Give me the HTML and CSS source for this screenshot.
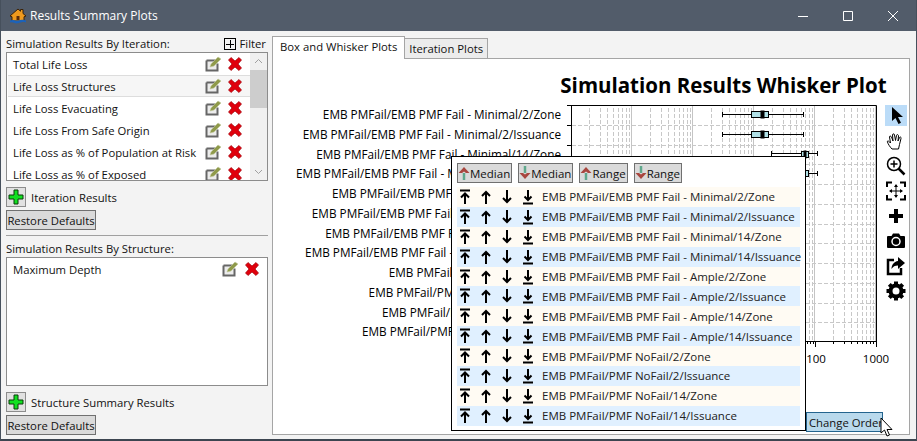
FILE: index.html
```html
<!DOCTYPE html>
<html lang="en">
<head>
<meta charset="UTF-8" />
<title>Results Summary Plots</title>
<link rel="stylesheet" href="styles.css">
</head>
<body>
<svg class="sprites" width="0" height="0">
  <symbol id="i-edit" viewBox="0 0 16 16">
    <path d="M1.500 4.500h9M1.500 4.500v10h11v-7" fill="#ececec" stroke="#666" stroke-width="2"/>
    <path d="M5 11l1-3 7-7 3 2-7 7z" fill="#8f9a4a" stroke="#c3c9a0" stroke-width=".6"/>
  </symbol>
  <symbol id="i-del" viewBox="0 0 14 14">
    <path d="M.5 3l2.500-2.500 4 3.500 4-3.500 2.500 2.500-3.500 4 3.500 4-2.500 2.500-4-3.500-4 3.500-2.500-2.500 3.500-4z" fill="#e0000c" stroke="#a00008" stroke-width=".7"/>
  </symbol>
  <symbol id="i-add" viewBox="0 0 16 16">
    <path d="M6 1h4v5h5v4h-5v5h-4v-5h-5v-4h5z" fill="#10e020" stroke="#0a3a0a" stroke-width="1"/>
  </symbol>
  <symbol id="i-top" viewBox="0 0 14 16">
    <path d="M2 1.500h10M7 15v-10M3 8.500l4-4 4 4" fill="none" stroke="#000" stroke-width="2"/>
  </symbol>
  <symbol id="i-up" viewBox="0 0 14 16">
    <path d="M7 15v-12M3 7l4-4 4 4" fill="none" stroke="#000" stroke-width="2"/>
  </symbol>
  <symbol id="i-down" viewBox="0 0 14 16">
    <path d="M7 1v12M3 9l4 4 4-4" fill="none" stroke="#000" stroke-width="2"/>
  </symbol>
  <symbol id="i-bottom" viewBox="0 0 14 16">
    <path d="M2 14.500h10M7 1v9.500M3.500 7.500l3.500 3.500 3.500-3.500" fill="none" stroke="#000" stroke-width="2"/>
  </symbol>
  <symbol id="i-sort-up" viewBox="0 0 12 16">
    <path d="M6 15v-7" stroke="#5fa88c" stroke-width="2.500"/>
    <path d="M.5 8l5.500-6 5.500 6-3.500 0-2-1.500-2 1.500z" fill="#a8473f"/>
  </symbol>
  <symbol id="i-sort-down" viewBox="0 0 12 16">
    <path d="M6 1v7" stroke="#5fa88c" stroke-width="2.500"/>
    <path d="M.5 8l5.500 6 5.500-6-3.500 0-2 1.500-2-1.500z" fill="#a8473f"/>
  </symbol>
</svg>

<div class="window">
  <div class="titlebar">
    <svg class="app-icon" width="18" height="18" viewBox="0 0 18 18">
      <path d="M1 9l8-7 2.500 2.200v-1.700h2.500v4l3 2.500-2 .8v4.200h-12v-4.200z" fill="#ee9a1e" stroke="#3a2208" stroke-width="1"/>
      <path d="M7.500 9h3v4h-3z" fill="#5a2c08"/>
      <path d="M1 13.500c3-1.500 5 .5 8 0s5-1.500 8 0v2c-3-1-5 0-8 .8s-5-1.800-8-.8z" fill="#1c62b8"/>
    </svg>
    <span class="title-text">Results Summary Plots</span>
    <div class="win-controls">
      <svg width="10" height="10" viewBox="0 0 10 10"><path d="M0 5.500h10" stroke="#fff"/></svg>
      <svg width="10" height="10" viewBox="0 0 10 10"><path d="M.5.500h9v9h-9z" fill="none" stroke="#fff"/></svg>
      <svg width="10" height="10" viewBox="0 0 10 10"><path d="M0 0l10 10M10 0l-10 10" stroke="#fff"/></svg>
    </div>
  </div>

  <div class="main">
    <div class="sidebar">
      <div class="list-head">
        <span>Simulation Results By Iteration:</span>
        <span class="filter"><span class="filter-box"></span>Filter</span>
      </div>
      <div class="list-box">
        <div class="list-rows">
          <div class="list-row"><span class="row-name">Total Life Loss</span><svg class="ico-edit"><use href="#i-edit"/></svg><svg class="ico-del"><use href="#i-del"/></svg></div>
          <div class="list-row hover"><span class="row-name">Life Loss Structures</span><svg class="ico-edit"><use href="#i-edit"/></svg><svg class="ico-del"><use href="#i-del"/></svg></div>
          <div class="list-row"><span class="row-name">Life Loss Evacuating</span><svg class="ico-edit"><use href="#i-edit"/></svg><svg class="ico-del"><use href="#i-del"/></svg></div>
          <div class="list-row"><span class="row-name">Life Loss From Safe Origin</span><svg class="ico-edit"><use href="#i-edit"/></svg><svg class="ico-del"><use href="#i-del"/></svg></div>
          <div class="list-row"><span class="row-name">Life Loss as % of Population at Risk</span><svg class="ico-edit"><use href="#i-edit"/></svg><svg class="ico-del"><use href="#i-del"/></svg></div>
          <div class="list-row"><span class="row-name">Life Loss as % of Exposed</span><svg class="ico-edit"><use href="#i-edit"/></svg><svg class="ico-del"><use href="#i-del"/></svg></div>
        </div>
        <div class="scrollbar">
          <svg class="scroll-arrow" width="17" height="17" viewBox="0 0 17 17"><path d="M5 10l3.500-3.500 3.500 3.500" fill="none" stroke="#a0a0a0"/></svg>
          <div class="scroll-track"><div class="scroll-thumb"></div></div>
          <svg class="scroll-arrow" width="17" height="17" viewBox="0 0 17 17"><path d="M5 7l3.500 3.500 3.500-3.500" fill="none" stroke="#a0a0a0"/></svg>
        </div>
      </div>
      <div class="add-row">
        <button class="add-btn"><svg width="16" height="16"><use href="#i-add"/></svg></button>
        <span>Iteration Results</span>
      </div>
      <button class="restore-btn">Restore Defaults</button>
      <div class="separator"></div>
      <div class="list-head">
        <span>Simulation Results By Structure:</span>
      </div>
      <div class="list-box">
        <div class="list-rows wide">
          <div class="list-row"><span class="row-name">Maximum Depth</span><svg class="ico-edit"><use href="#i-edit"/></svg><svg class="ico-del"><use href="#i-del"/></svg></div>
        </div>
      </div>
      <div class="add-row">
        <button class="add-btn"><svg width="16" height="16"><use href="#i-add"/></svg></button>
        <span>Structure Summary Results</span>
      </div>
      <button class="restore-btn">Restore Defaults</button>
    </div>

    <div class="tabs">
      <div class="tab-strip">
        <div class="tab active">Box and Whisker Plots</div>
        <div class="tab">Iteration Plots</div>
      </div>
      <div class="tab-pane">
        <h1 class="plot-title">Simulation Results Whisker Plot</h1>
        <div class="chart">
          <div class="categories">
            <div>EMB PMFail/EMB PMF Fail - Minimal/2/Zone</div>
            <div>EMB PMFail/EMB PMF Fail - Minimal/2/Issuance</div>
            <div>EMB PMFail/EMB PMF Fail - Minimal/14/Zone</div>
            <div>EMB PMFail/EMB PMF Fail - Minimal/14/Issuance</div>
            <div>EMB PMFail/EMB PMF Fail - Ample/2/Zone</div>
            <div>EMB PMFail/EMB PMF Fail - Ample/2/Issuance</div>
            <div>EMB PMFail/EMB PMF Fail - Ample/14/Zone</div>
            <div>EMB PMFail/EMB PMF Fail - Ample/14/Issuance</div>
            <div>EMB PMFail/PMF NoFail/2/Zone</div>
            <div>EMB PMFail/PMF NoFail/2/Issuance</div>
            <div>EMB PMFail/PMF NoFail/14/Zone</div>
            <div>EMB PMFail/PMF NoFail/14/Issuance</div>
          </div>
          <svg class="plot" width="316" height="262" viewBox="566 105 316 262">
            <defs>
              <pattern id="decade" x="571" y="0" width="61" height="400" patternUnits="userSpaceOnUse">
                <g stroke="#c8c8c8" stroke-dasharray="4 2" fill="none">
                  <path d="M18.500 0v400M29.500 0v400M36.500 0v400M42.500 0v400M47.500 0v400M51.500 0v400M55.500 0v400M58.500 0v400"/>
                </g>
                <path d="M60.500 0v400" stroke="#c4c4c4"/>
              </pattern>
            </defs>
            <rect x="572" y="105" width="305" height="236" fill="url(#decade)"/>
            <g stroke="#c8c8c8" stroke-dasharray="4 2">
              <path d="M572 125.500h305M572 145.500h305M572 164.500h305M572 184.500h305M572 204.500h305M572 224.500h305M572 243.500h305M572 263.500h305M572 283.500h305M572 303.500h305M572 322.500h305"/>
            </g>
            <g stroke="#000" fill="none">
              <path d="M571.500 105.500h305v236h-305z"/>
              <path d="M567 105.500h5M567 125.500h5M567 145.500h5M567 164.500h5M567 184.500h5M567 204.500h5M567 224.500h5M567 243.500h5M567 263.500h5M567 283.500h5M567 303.500h5M567 322.500h5M567 341.500h5"/>
              <path d="M815.500 341v6M876.500 341v6M807.500 341v3M810.500 341v3M813.500 341v3M833.500 341v3M844.500 341v3M851.500 341v3M857.500 341v3M862.500 341v3M866.500 341v3M870.500 341v3M873.500 341v3"/>
            </g>
            <g stroke="#000" fill="#b0e0e6">
              <path d="M722.500 114.500h81M722.500 112v5M803.500 112v5" fill="none"/>
              <rect x="751.500" y="111.500" width="17" height="6"/>
              <rect x="761" y="111" width="3" height="7" fill="#000"/>
              <path d="M722.500 134.500h81M722.500 132v5M803.500 132v5" fill="none"/>
              <rect x="751.500" y="131.500" width="17" height="6"/>
              <rect x="761" y="131" width="3" height="7" fill="#000"/>
              <path d="M771.500 153.500h46M771.500 151v5M817.500 151v5" fill="none"/>
              <rect x="801.500" y="151.500" width="7" height="6"/>
              <rect x="804" y="151" width="2" height="7" fill="#000"/>
              <path d="M771.500 173.500h46M817.500 171v5" fill="none"/>
              <rect x="801.500" y="170.500" width="7" height="6"/>
            </g>
            <text class="axis-label" x="816" y="363" text-anchor="middle">100</text>
            <text class="axis-label" x="876" y="363" text-anchor="middle">1000</text>
          </svg>
          <div class="toolbar">
            <div class="tool selected"><svg width="18" height="20" viewBox="0 0 18 20"><path d="M5 1v14l3.500-3 3 6 2.500-1.200-3-5.800h5z"/></svg></div>
            <div class="tool"><svg width="20" height="20" viewBox="0 0 20 20"><path d="M6 18c-2-2-4-5-4.500-7s1.500-1 3 1l-1-6c0-1.500 1.500-1 2 0l1.500 4-.5-6c0-1.500 2-1.500 2 0l1 5.500 1-5c.3-1.500 2-1 2 .5l-.5 5 1.500-3.500c.5-1 2-.5 1.500 1l-1.500 6-1 4.500z" fill="#fff" stroke="#000"/></svg></div>
            <div class="tool"><svg width="20" height="20" viewBox="0 0 20 20"><circle cx="8" cy="8" r="6.500" fill="none" stroke="#000" stroke-width="1.500"/><path d="M12.500 12.500l6 6" stroke="#000" stroke-width="2.500"/><path d="M4.500 8h7M8 4.500v7" stroke="#000" stroke-width="1.500"/></svg></div>
            <div class="tool"><svg width="20" height="20" viewBox="0 0 20 20"><g fill="none" stroke="#000" stroke-width="2"><path d="M1 6v-4.500h5M14 1.500h5v4.500M1 14v4.500h5M14 18.500h5v-4.500"/></g><path d="M10 4v12M4 10h12" stroke="#000"/><path d="M10 3l2 3h-4zM10 17l2-3h-4zM3 10l3 2v-4zM17 10l-3 2v-4z"/></svg></div>
            <div class="tool"><svg width="18" height="18" viewBox="0 0 18 18"><path d="M7 2h4v5h5v4h-5v5h-4v-5h-5v-4h5z"/></svg></div>
            <div class="tool"><svg width="20" height="18" viewBox="0 0 20 18"><path d="M1 5q0-1 1-1h3.500l1.500-2.500h6l1.500 2.500h3.500q1 0 1 1v10q0 1-1 1h-16q-1 0-1-1z"/><circle cx="10" cy="9.500" r="4" fill="none" stroke="#fff" stroke-width="1.500"/></svg></div>
            <div class="tool"><svg width="20" height="20" viewBox="0 0 20 20"><path d="M8 4h-6v14h13v-6" fill="none" stroke="#000" stroke-width="2.500"/><path d="M12 1l7 6-7 6v-3.500c-3 0-5 1-6.500 3.500 0-4 2.500-7.500 6.500-8z"/></svg></div>
            <div class="tool"><svg width="20" height="20" viewBox="0 0 20 20"><circle cx="10" cy="10" r="5.500" fill="none" stroke="#000" stroke-width="4"/><g stroke="#000" stroke-width="4"><path d="M10 .5v19M.5 10h19M3.300 3.300l13.400 13.400M16.700 3.300l-13.400 13.400" stroke-dasharray="4 11"/></g></svg></div>
          </div>
        </div>
        <div class="pane-foot">
          <button class="change-order">Change Order</button>
        </div>

        <div class="order-popup">
          <div class="sort-btns">
            <button class="sort-btn"><svg width="12" height="16"><use href="#i-sort-up"/></svg>Median</button>
            <button class="sort-btn"><svg width="12" height="16"><use href="#i-sort-down"/></svg>Median</button>
            <button class="sort-btn"><svg width="12" height="16"><use href="#i-sort-up"/></svg>Range</button>
            <button class="sort-btn"><svg width="12" height="16"><use href="#i-sort-down"/></svg>Range</button>
          </div>
          <div class="order-rows">
            <div class="order-row"><svg><use href="#i-top"/></svg><svg><use href="#i-up"/></svg><svg><use href="#i-down"/></svg><svg><use href="#i-bottom"/></svg><span>EMB PMFail/EMB PMF Fail - Minimal/2/Zone</span></div>
            <div class="order-row"><svg><use href="#i-top"/></svg><svg><use href="#i-up"/></svg><svg><use href="#i-down"/></svg><svg><use href="#i-bottom"/></svg><span>EMB PMFail/EMB PMF Fail - Minimal/2/Issuance</span></div>
            <div class="order-row"><svg><use href="#i-top"/></svg><svg><use href="#i-up"/></svg><svg><use href="#i-down"/></svg><svg><use href="#i-bottom"/></svg><span>EMB PMFail/EMB PMF Fail - Minimal/14/Zone</span></div>
            <div class="order-row"><svg><use href="#i-top"/></svg><svg><use href="#i-up"/></svg><svg><use href="#i-down"/></svg><svg><use href="#i-bottom"/></svg><span>EMB PMFail/EMB PMF Fail - Minimal/14/Issuance</span></div>
            <div class="order-row"><svg><use href="#i-top"/></svg><svg><use href="#i-up"/></svg><svg><use href="#i-down"/></svg><svg><use href="#i-bottom"/></svg><span>EMB PMFail/EMB PMF Fail - Ample/2/Zone</span></div>
            <div class="order-row"><svg><use href="#i-top"/></svg><svg><use href="#i-up"/></svg><svg><use href="#i-down"/></svg><svg><use href="#i-bottom"/></svg><span>EMB PMFail/EMB PMF Fail - Ample/2/Issuance</span></div>
            <div class="order-row"><svg><use href="#i-top"/></svg><svg><use href="#i-up"/></svg><svg><use href="#i-down"/></svg><svg><use href="#i-bottom"/></svg><span>EMB PMFail/EMB PMF Fail - Ample/14/Zone</span></div>
            <div class="order-row"><svg><use href="#i-top"/></svg><svg><use href="#i-up"/></svg><svg><use href="#i-down"/></svg><svg><use href="#i-bottom"/></svg><span>EMB PMFail/EMB PMF Fail - Ample/14/Issuance</span></div>
            <div class="order-row"><svg><use href="#i-top"/></svg><svg><use href="#i-up"/></svg><svg><use href="#i-down"/></svg><svg><use href="#i-bottom"/></svg><span>EMB PMFail/PMF NoFail/2/Zone</span></div>
            <div class="order-row"><svg><use href="#i-top"/></svg><svg><use href="#i-up"/></svg><svg><use href="#i-down"/></svg><svg><use href="#i-bottom"/></svg><span>EMB PMFail/PMF NoFail/2/Issuance</span></div>
            <div class="order-row"><svg><use href="#i-top"/></svg><svg><use href="#i-up"/></svg><svg><use href="#i-down"/></svg><svg><use href="#i-bottom"/></svg><span>EMB PMFail/PMF NoFail/14/Zone</span></div>
            <div class="order-row"><svg><use href="#i-top"/></svg><svg><use href="#i-up"/></svg><svg><use href="#i-down"/></svg><svg><use href="#i-bottom"/></svg><span>EMB PMFail/PMF NoFail/14/Issuance</span></div>
          </div>
        </div>
        <svg class="mouse-cursor" width="14" height="20" viewBox="0 0 14 20"><path d="M1 1v15l3.500-3 2.500 6 2.500-1-2.500-5.500h5z" fill="#fff" stroke="#000"/></svg>
      </div>
    </div>
  </div>
</div>
</body>
</html>
```

FILE: styles.css
```css
:root {
  --title-bg: #525c6a;
  --panel: #f3f3f3;
  --border: #a5a5a5;
  --text: #111;
}
html, body {
  margin: 0;
  padding: 0;
  height: 100%;
  overflow: hidden;
  background: var(--panel);
  color: var(--text);
  font-family: 'Open Sans', 'Noto Sans', Arial, sans-serif;
  font-size: 11.3px;
}
.sprites {
  position: absolute;
}
button {
  font: inherit;
  color: inherit;
  padding: 0;
  white-space: nowrap;
}
.window {
  width: 917px;
  height: 441px;
  box-sizing: border-box;
  border: 1px solid #46505c;
  border-top: none;
  border-bottom: 2px solid #3c4550;
  display: flex;
  flex-direction: column;
}
.titlebar {
  height: 31px;
  flex: none;
  background: var(--title-bg);
  color: #fff;
  display: flex;
  align-items: center;
  padding-left: 8px;
  font-size: 12px;
}
.app-icon {
  margin-right: 3px;
}
.title-text {
  flex: 1;
}
.win-controls {
  display: flex;
  align-items: center;
  gap: 35px;
  padding-right: 18px;
}
.main {
  flex: 1;
  display: flex;
  padding: 5px 6px 4px 5px;
  min-height: 0;
}

/* left side lists */
.sidebar {
  width: 262px;
  flex: none;
  display: flex;
  flex-direction: column;
}
.list-head {
  height: 16px;
  display: flex;
  justify-content: space-between;
  align-items: center;
  line-height: 16px;
}
.filter {
  display: flex;
  align-items: center;
  gap: 3px;
  padding-right: 2px;
}
.filter-box {
  width: 10px;
  height: 10px;
  border: 1px solid #000;
  background:
    linear-gradient(#000, #000) center / 8px 1px no-repeat,
    linear-gradient(#000, #000) center / 1px 8px no-repeat;
}
.list-box {
  height: 129px;
  flex: none;
  box-sizing: border-box;
  border: 1px solid #8c8c8c;
  background: #fff;
  display: flex;
  overflow: hidden;
}
.list-rows {
  width: 242px;
  flex: none;
  padding-left: 1px;
}
.list-rows.wide {
  width: 259px;
}
.list-row {
  height: 22px;
  box-sizing: border-box;
  display: flex;
  align-items: center;
  padding-left: 5px;
}
.list-row.hover {
  background: #f6f6f6;
  border-top: 1px solid #ddd;
  border-bottom: 1px solid #ddd;
}
.row-name {
  flex: 1;
  white-space: nowrap;
}
.ico-edit {
  width: 16px;
  height: 16px;
  margin-right: 7px;
  flex: none;
}
.ico-del {
  width: 14px;
  height: 14px;
  margin-right: 8px;
  flex: none;
}
.scrollbar {
  width: 17px;
  background: #f0f0f0;
  display: flex;
  flex-direction: column;
}
.scroll-arrow {
  flex: none;
}
.scroll-track {
  flex: 1;
}
.scroll-thumb {
  height: 38px;
  background: #cdcdcd;
}
.add-row {
  margin-top: 6px;
  display: flex;
  align-items: center;
  gap: 5px;
}
.add-btn {
  width: 20px;
  height: 20px;
  box-sizing: border-box;
  border: 1px solid #8c8c8c;
  background: #e1e1e1;
  display: flex;
  align-items: center;
  justify-content: center;
}
.restore-btn {
  margin-top: 3px;
  width: 90px;
  height: 20px;
  box-sizing: border-box;
  border: 1px solid #707070;
  background: #dadada;
}
.separator {
  margin: 5px 0;
  height: 1px;
  flex: none;
  background: #a0a0a0;
}

/* tabs */
.tabs {
  flex: 1;
  display: flex;
  flex-direction: column;
  margin-left: 4px;
}
.tab-strip {
  display: flex;
  align-items: flex-end;
  height: 23px;
  flex: none;
  margin-bottom: -1px;
  position: relative;
  z-index: 1;
}
.tab {
  height: 21px;
  box-sizing: border-box;
  padding: 0 4px;
  line-height: 19px;
  background: #ececec;
  border: 1px solid var(--border);
  border-left: none;
}
.tab.active {
  height: 23px;
  background: #fff;
  border-left: 1px solid var(--border);
  border-bottom: none;
  padding: 0 7px;
  line-height: 20px;
}
.tab-pane {
  flex: 1;
  position: relative;
  box-sizing: border-box;
  border: 1px solid var(--border);
  background: #fff;
  display: flex;
  flex-direction: column;
  min-height: 0;
}
.plot-title {
  margin: 12px 0 0 287px;
  height: 34px;
  width: 327px;
  font-size: 20.5px;
  line-height: 28px;
  font-weight: 700;
  color: #000;
  white-space: nowrap;
  text-align: center;
}
.chart {
  display: flex;
  align-items: flex-start;
}
.categories {
  width: 288px;
  margin-right: 5px;
  flex: none;
  text-align: right;
  color: #000;
  font-size: 11.75px;
}
.categories div {
  height: 19.75px;
  line-height: 19.75px;
  white-space: nowrap;
}
.plot {
  flex: none;
  overflow: visible;
}
.axis-label {
  font-size: 11.5px;
  fill: #000;
}
.toolbar {
  display: flex;
  flex-direction: column;
  align-items: center;
  width: 22px;
  margin-left: 3px;
}
.tool {
  width: 22px;
  height: 21px;
  margin-bottom: 4px;
  display: flex;
  align-items: center;
  justify-content: center;
}
.tool.selected {
  background: #bbdcf8;
}
.pane-foot {
  display: flex;
  justify-content: flex-end;
  margin-top: auto;
  padding: 0 26px 2px 0;
}
.change-order {
  width: 77px;
  height: 20px;
  box-sizing: border-box;
  border: 1px solid #24648e;
  background: #b9d9ec;
  text-align: left;
  padding-left: 2px;
}

/* reorder popup */
.order-popup {
  position: absolute;
  left: 178px;
  top: 97px;
  width: 355px;
  height: 275px;
  box-sizing: border-box;
  border: 1px solid #000;
  background: #fff;
  padding: 6px 5px;
  font-size: 11.5px;
}
.sort-btns {
  display: flex;
  gap: 6px;
  margin-bottom: 4px;
}
.sort-btn {
  height: 20px;
  box-sizing: border-box;
  border: 1px solid #707070;
  background: #dadada;
  display: flex;
  align-items: center;
  padding: 0 1px 0 0;
}
.order-row {
  height: 19.9px;
  display: flex;
  align-items: center;
  padding-left: 1px;
  width: 342px;
  color: #222;
  white-space: nowrap;
}
.order-row:nth-child(odd) {
  background: #fffbf3;
}
.order-row:nth-child(even) {
  background: #e0f0ff;
}
.order-row svg {
  width: 14px;
  height: 16px;
  margin-right: 7px;
  flex: none;
}
.mouse-cursor {
  position: absolute;
  left: 607px;
  top: 358px;
}
```
